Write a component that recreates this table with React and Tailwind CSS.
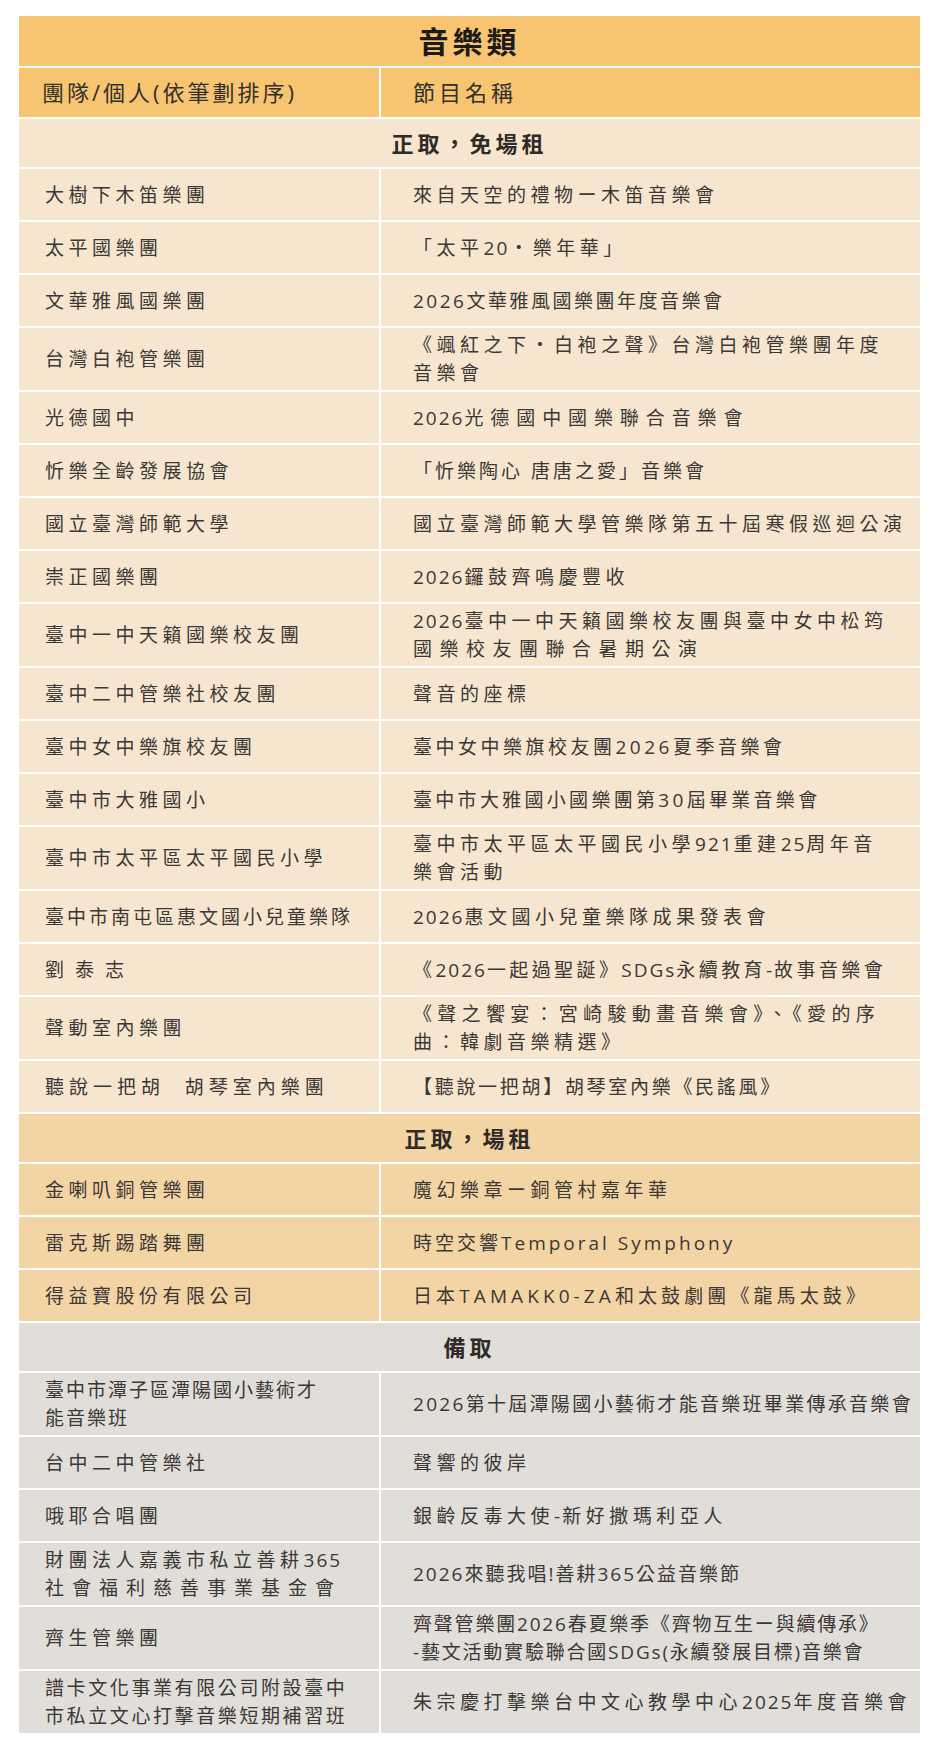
import React from "react";

// row: [team, show, opts]
// opts.l / opts.r = tracking for the whole cell (opts.rm keeps latin runs tighter);
// a cell may also be a list of lines, where [text, class] gives a line its own tracking
const sections = [
  {
    title: "正取，免場租",
    bg: "bg-[#f6e6cf]",
    rows: [
      ["大樹下木笛樂團", "來自天空的禮物ー木笛音樂會"],
      ["太平國樂團", "「太平20・樂年華」"],
      ["文華雅風國樂團", "2026文華雅風國樂團年度音樂會", { r: "tracking-[2.5px]" }],
      ["台灣白袍管樂團", "《颯紅之下・白袍之聲》台灣白袍管樂團年度\n音樂會"],
      ["光德國中", "2026光德國中國樂聯合音樂會", { r: "tracking-[6.9px]", rm: true }],
      ["忻樂全齡發展協會", "「忻樂陶心 唐唐之愛」音樂會", { r: "tracking-[3px]" }],
      ["國立臺灣師範大學", "國立臺灣師範大學管樂隊第五十屆寒假巡迴公演"],
      ["崇正國樂團", "2026鑼鼓齊鳴慶豐收"],
      ["臺中一中天籟國樂校友團", ["2026臺中一中天籟國樂校友團與臺中女中松筠", ["國樂校友團聯合暑期公演", "tracking-[7.5px]"]]],
      ["臺中二中管樂社校友團", "聲音的座標"],
      ["臺中女中樂旗校友團", "臺中女中樂旗校友團2026夏季音樂會", { r: "tracking-[3.5px]" }],
      ["臺中市大雅國小", "臺中市大雅國小國樂團第30屆畢業音樂會", { r: "tracking-[3.3px]" }],
      ["臺中市太平區太平國民小學", "臺中市太平區太平國民小學921重建25周年音\n樂會活動"],
      ["臺中市南屯區惠文國小兒童樂隊", "2026惠文國小兒童樂隊成果發表會", { l: "tracking-[3px]" }],
      ["劉泰志", "《2026一起過聖誕》SDGs永續教育-故事音樂會", { l: "tracking-[11px]", r: "tracking-[3.4px]", rm: true }],
      ["聲動室內樂團", [["《聲之饗宴：宮崎駿動畫音樂會》、《愛的序", "tracking-[5.3px]"], "曲：韓劇音樂精選》"]],
      ["聽說一把胡\u00a0\u00a0胡琴室內樂團", "【聽說一把胡】胡琴室內樂《民謠風》", { l: "tracking-[5px]", r: "tracking-[2.7px]" }],
    ],
  },
  {
    title: "正取，場租",
    bg: "bg-[#f3d4a5]",
    rows: [
      ["金喇叭銅管樂團", "魔幻樂章ー銅管村嘉年華"],
      ["雷克斯踢踏舞團", "時空交響Temporal Symphony", { r: "tracking-[3px]" }],
      ["得益寶股份有限公司", "日本TAMAKK0-ZA和太鼓劇團《龍馬太鼓》", { r: "tracking-[4.1px]" }],
    ],
  },
  {
    title: "備取",
    bg: "bg-[#e1ddd8]",
    rows: [
      ["臺中市潭子區潭陽國小藝術才\n能音樂班", "2026第十屆潭陽國小藝術才能音樂班畢業傳承音樂會", { l: "tracking-[2px]", r: "tracking-[2.3px]" }],
      ["台中二中管樂社", "聲響的彼岸"],
      ["哦耶合唱團", "銀齡反毒大使-新好撒瑪利亞人"],
      [["財團法人嘉義市私立善耕365", ["社會福利慈善事業基金會", "tracking-[8px]"]], "2026來聽我唱!善耕365公益音樂節", { r: "tracking-[2px]" }],
      ["齊生管樂團", "齊聲管樂團2026春夏樂季《齊物互生ー與續傳承》\n-藝文活動實驗聯合國SDGs(永續發展目標)音樂會", { r: "tracking-[1.8px]" }],
      ["譜卡文化事業有限公司附設臺中\n市私立文心打擊音樂短期補習班", "朱宗慶打擊樂台中文心教學中心2025年度音樂會", { l: "tracking-[2.6px]" }],
    ],
  },
];

// latin runs get a narrower spacing than the CJK glyphs
const Mixed = ({ line }) =>
  line.split(/([\x21-\x7e]+)/).map((part, j) =>
    j % 2 === 1 ? (
      <span key={j} className="tracking-[2px]">
        {part}
      </span>
    ) : (
      part
    )
  );

const Text = ({ text, uniform }) => {
  const lines = Array.isArray(text) ? text : text.split("\n");
  return lines.map((line, i) => (
    <React.Fragment key={i}>
      {i > 0 && <br />}
      {Array.isArray(line) ? (
        <span className={line[1]}>{line[0]}</span>
      ) : uniform ? (
        line
      ) : (
        <Mixed line={line} />
      )}
    </React.Fragment>
  ));
};

const Cell = ({ bg, pad, track, mixed, text }) => (
  <div
    className={`${bg} ${pad} ${track || "tracking-[4.5px]"} min-h-[51px] flex items-center py-[3px] leading-[28px] whitespace-nowrap overflow-hidden`}
  >
    <div>
      <Text text={text} uniform={!!track && !mixed} />
    </div>
  </div>
);

const App = () => {
  return (
    <div
      className="bg-white min-h-[1753px] pt-[16px] px-[19px] text-[#3b3835]"
      style={{ fontFamily: '"Open Sans", "Noto Sans CJK TC", sans-serif' }}
    >
      <div className="w-[901px] flex flex-col gap-[2px] bg-white">
        <div className="h-[50px] bg-[#f7c571] flex items-center justify-center text-[30px] font-bold tracking-[4px] text-[#1d1b19]">
          音樂類
        </div>
        <div className="grid grid-cols-[360px_539px] gap-[2px]">
          <div className="h-[49px] bg-[#f7c571] flex items-center pl-[23px] text-[22px] tracking-[3px] text-[#332f2b]">
            團隊/個人(依筆劃排序)
          </div>
          <div className="h-[49px] bg-[#f7c571] flex items-center pl-[32px] text-[22px] tracking-[4px] text-[#332f2b]">
            節目名稱
          </div>
        </div>
        {sections.map((sec) => (
          <React.Fragment key={sec.title}>
            <div
              className={`h-[48px] ${sec.bg} flex items-center justify-center text-[22px] font-semibold tracking-[4px] text-[#2e2b28]`}
            >
              {sec.title}
            </div>
            {sec.rows.map(([team, show, opts = {}], k) => (
              <div key={k} className="grid grid-cols-[360px_539px] gap-[2px] text-[19px]">
                <Cell bg={sec.bg} pad="pl-[26px]" track={opts.l} text={team} />
                <Cell bg={sec.bg} pad="pl-[32px]" track={opts.r} mixed={opts.rm} text={show} />
              </div>
            ))}
          </React.Fragment>
        ))}
      </div>
    </div>
  );
};

export default App;
